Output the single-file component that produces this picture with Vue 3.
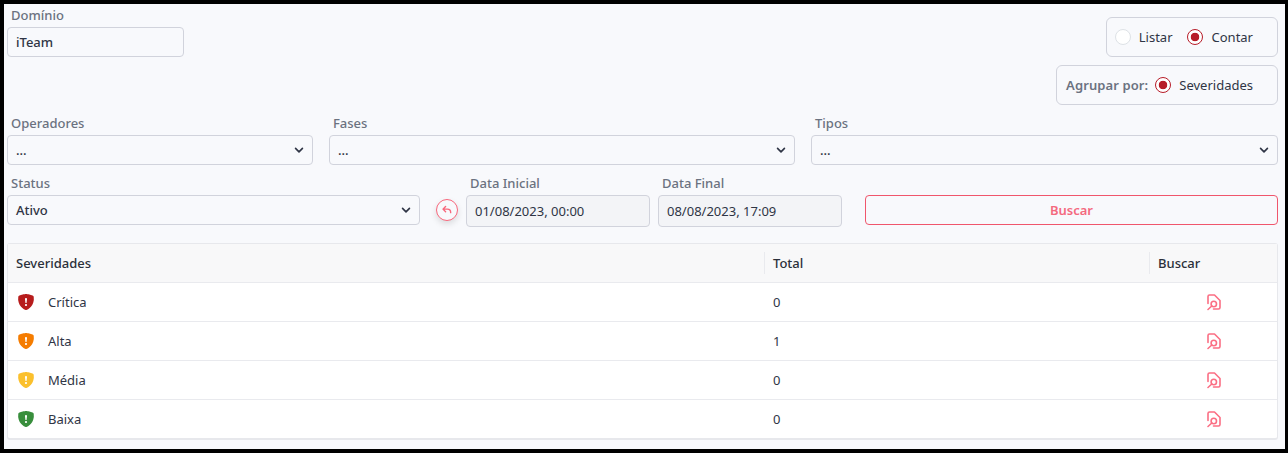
<template>
  <div class="page">
    <div class="top-row">
      <div class="field domain">
        <label>Domínio</label>
        <input class="control strong" value="iTeam" readonly />
      </div>

      <div class="mode-panels">
        <div class="panel">
          <span class="radio" />
          <span class="radio-text listar">Listar</span>
          <span class="radio checked" />
          <span class="radio-text contar">Contar</span>
        </div>
        <div class="panel group">
          <span class="group-label">Agrupar por:</span>
          <span class="radio checked" />
          <span class="radio-text severidades">Severidades</span>
        </div>
      </div>
    </div>

    <div class="filter-row">
      <div v-for="f in filters" :key="f.label" class="field" :class="f.cls">
        <label>{{ f.label }}</label>
        <div class="control select">
          <span class="strong">...</span>
          <svg class="chevron" viewBox="0 0 16 16"><path d="M2.5 5.5 8 11l5.5-5.5" /></svg>
        </div>
      </div>
    </div>

    <div class="search-row">
      <div class="field status">
        <label>Status</label>
        <div class="control select">
          <span class="strong">Ativo</span>
          <svg class="chevron" viewBox="0 0 16 16"><path d="M2.5 5.5 8 11l5.5-5.5" /></svg>
        </div>
      </div>

      <button class="undo" type="button" aria-label="Voltar">
        <svg viewBox="0 0 16 16"><path d="M6.4 4 3.4 7l3 3M3.8 7h4.8c2.2 0 3.6 1.4 3.6 4" /></svg>
      </button>

      <div class="field date">
        <label>Data Inicial</label>
        <input class="control date-input" value="01/08/2023, 00:00" readonly />
      </div>
      <div class="field date">
        <label>Data Final</label>
        <input class="control date-input" value="08/08/2023, 17:09" readonly />
      </div>

      <button class="search" type="button">Buscar</button>
    </div>

    <div class="table">
      <div class="tr head">
        <div class="td c1">Severidades</div>
        <div class="td c2"><span class="sep" />Total</div>
        <div class="td c3"><span class="sep" />Buscar</div>
      </div>
      <div v-for="r in rows" :key="r.name" class="tr">
        <div class="td c1">
          <svg class="shield" viewBox="0 0 16 16" preserveAspectRatio="none" :style="{ fill: r.color }">
            <path d="M8 0c-.69 0-1.843.265-2.928.56-1.11.3-2.229.655-2.887.87a1.54 1.54 0 0 0-1.044 1.262c-.596 4.477.787 7.795 2.465 9.99a11.777 11.777 0 0 0 2.517 2.453c.386.273.744.482 1.048.625.28.132.581.24.829.24s.548-.108.829-.24a7.159 7.159 0 0 0 1.048-.625 11.775 11.775 0 0 0 2.517-2.453c1.678-2.195 3.061-5.513 2.465-9.99a1.541 1.541 0 0 0-1.044-1.263 62.467 62.467 0 0 0-2.887-.87C9.843.266 8.69 0 8 0zm-.55 8.502L7.1 4.995a.905.905 0 1 1 1.8 0l-.35 3.507a.552.552 0 0 1-1.1 0zM8.002 12a1 1 0 1 1 0-2 1 1 0 0 1 0 2z" />
          </svg>
          {{ r.name }}
        </div>
        <div class="td c2">{{ r.total }}</div>
        <div class="td c3 action">
          <svg class="file-search" viewBox="0 0 14 16">
            <path d="M1 9.5V2.5Q1 1 2.5 1H7.5L13 6.5V13.5Q13 15 11.5 15H6.5" />
            <circle cx="6.8" cy="10" r="2.7" />
            <path d="M4.8 12 1 15.5" />
          </svg>
        </div>
      </div>
    </div>
  </div>
</template>

<script setup>
const filters = [
  { label: 'Operadores', cls: 'op' },
  { label: 'Fases', cls: 'fases' },
  { label: 'Tipos', cls: 'tipos' },
]

const rows = [
  { name: 'Crítica', total: 0, color: '#b71c1c' },
  { name: 'Alta', total: 1, color: '#f57c00' },
  { name: 'Média', total: 0, color: '#fbc02d' },
  { name: 'Baixa', total: 0, color: '#388e3c' },
]
</script>

<style>
html,
body {
  margin: 0;
  background: #000;
}
</style>

<style scoped>
.page {
  box-sizing: border-box;
  width: 1288px;
  height: 453px;
  background: #f8f9fc;
  border: solid #000;
  border-width: 4px 3px 4px 4px;
  padding: 0 7px 0 3px;
  font-family: "Noto Sans", "Open Sans", sans-serif;
  font-size: 13px;
  color: #2f3545;
  overflow: hidden;
}

.top-row {
  display: flex;
  justify-content: space-between;
  height: 106px;
}

.field {
  display: flex;
  flex-direction: column;
}

.field label {
  height: 18px;
  line-height: 12px;
  padding-left: 4px;
  font-weight: 500;
  color: #6b7280;
}

.domain {
  width: 177px;
  padding-top: 5px;
}

.control {
  box-sizing: border-box;
  width: 100%;
  height: 30px;
  padding: 0 8px;
  background: #f8f9fc;
  border: 1px solid #d1d3dc;
  border-radius: 4px;
  font: inherit;
  color: #2f3545;
  outline: none;
}

.strong {
  font-weight: 500;
}

.select {
  display: flex;
  align-items: center;
  justify-content: space-between;
}

.chevron {
  width: 10px;
  height: 10px;
  fill: none;
  stroke: #2f3545;
  stroke-width: 2.6;
  stroke-linecap: round;
  stroke-linejoin: round;
}

.mode-panels {
  display: flex;
  flex-direction: column;
  align-items: flex-end;
  gap: 8px;
  padding-top: 13px;
}

.panel {
  box-sizing: border-box;
  display: flex;
  align-items: center;
  height: 40px;
  padding: 0 24px 0 8px;
  border: 1px solid #d1d3dc;
  border-radius: 6px;
}

.panel.group {
  padding-left: 9px;
}

.radio {
  box-sizing: border-box;
  flex: none;
  width: 16px;
  height: 16px;
  background: #fff;
  border: 1px solid #dee2e6;
  border-radius: 50%;
}

.radio.checked {
  border-color: #b71c28;
  background: radial-gradient(circle, #b71c28 0 4px, #fff 4.6px);
}

.listar {
  margin: 0 14px 0 8px;
}

.contar {
  margin-left: 9px;
}

.severidades {
  margin-left: 8px;
}

.group-label {
  margin-right: 7px;
  font-weight: 600;
  letter-spacing: 0.1px;
  color: #6b7280;
}

.filter-row {
  display: flex;
  gap: 16px;
  height: 61px;
  padding-top: 7px;
  box-sizing: border-box;
}

.op {
  width: 306px;
}

.fases {
  width: 466px;
}

.tipos {
  width: 467px;
}

.search-row {
  display: flex;
  align-items: flex-start;
  height: 72px;
  padding-top: 6px;
  box-sizing: border-box;
}

.status {
  width: 413px;
}

.undo {
  flex: none;
  width: 22px;
  height: 22px;
  margin: 22px 8px 0 16px;
  padding: 3px;
  background: #f8f9fc;
  border: 1px solid #f8677c;
  border-radius: 50%;
  box-shadow: 0 3px 6px rgba(0, 0, 0, 0.12);
}

.undo svg {
  display: block;
  fill: none;
  stroke: #f8677c;
  stroke-width: 1.6;
  stroke-linecap: round;
  stroke-linejoin: round;
}

.date {
  width: 184px;
  margin-right: 8px;
}

.date-input {
  height: 32px;
  background: #f3f4f7;
}

.search {
  flex: 1;
  height: 30px;
  margin: 18px 0 0 15px;
  background: #f8f9fc;
  border: 1px solid #f0566c;
  border-radius: 4px;
  font: inherit;
  font-weight: 600;
  color: #f4697e;
}

.table {
  background: #fff;
  border: 1px solid #e7e8ec;
  border-bottom-width: 2px;
  border-radius: 3px;
}

.tr {
  display: flex;
  height: 39px;
  border-top: 1px solid #e9eaee;
  box-sizing: border-box;
}

.tr.head {
  height: 38px;
  border-top: 0;
  background: #f8f8f9;
  font-weight: 500;
  color: #2b303a;
}

.td {
  position: relative;
  display: flex;
  align-items: center;
  box-sizing: border-box;
  padding-left: 8px;
}

.c1 {
  width: 756px;
}

.c2 {
  width: 385px;
  padding-left: 9px;
}

.c3 {
  flex: 1;
  padding-left: 9px;
}

.sep {
  position: absolute;
  left: 0;
  top: 8px;
  bottom: 8px;
  width: 1px;
  background: #e9eaee;
}

.shield {
  width: 18px;
  height: 16px;
  margin: 0 13px 0 1px;
}

.action {
  padding-left: 58px;
}

.file-search {
  width: 14px;
  height: 16px;
  overflow: visible;
  fill: none;
  stroke: #fb6f84;
  stroke-width: 1.6;
  stroke-linecap: round;
  stroke-linejoin: round;
}
</style>
